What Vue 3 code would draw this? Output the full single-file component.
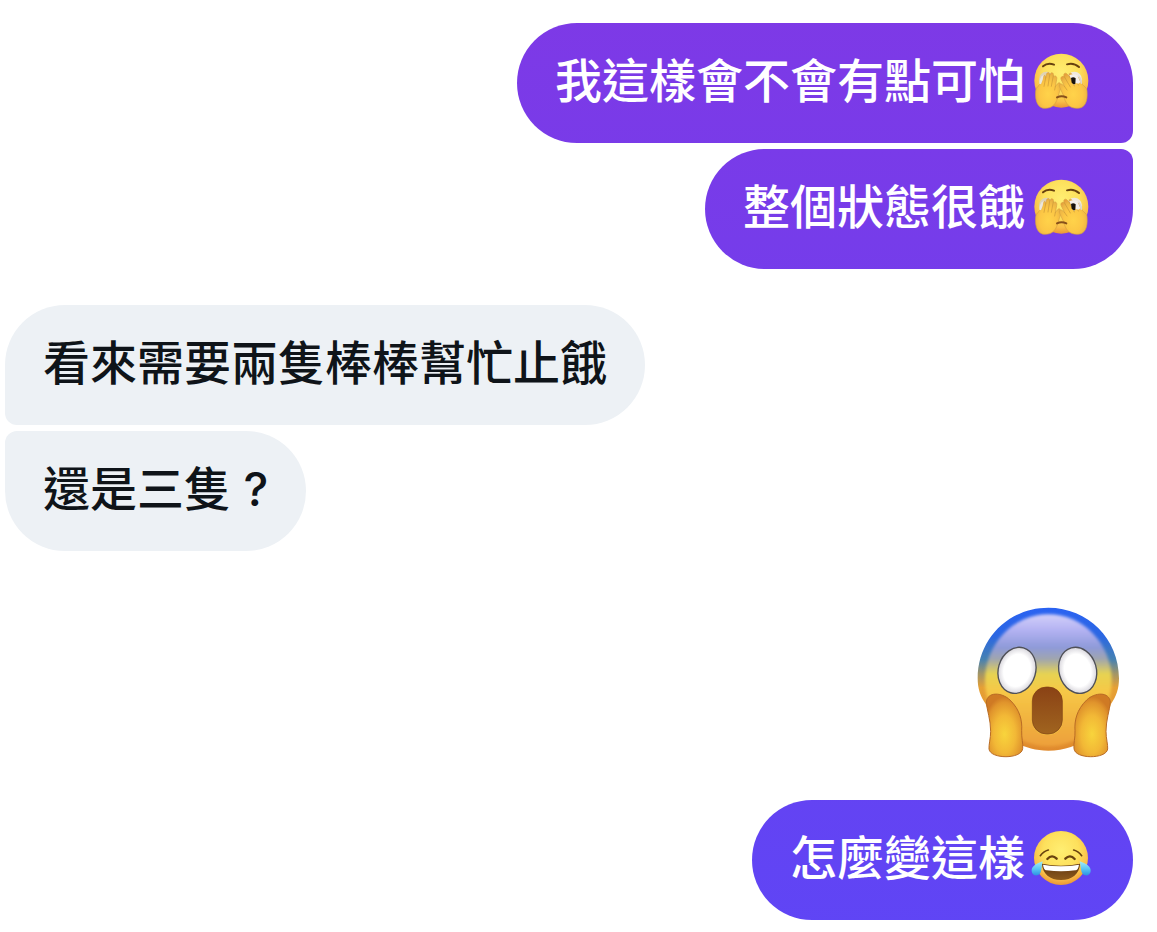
<template>
  <main class="chat">
    <svg class="emoji-defs" aria-hidden="true">
      <defs>
        <radialGradient id="skin" cx="0.5" cy="0.36" r="0.66">
          <stop offset="0" stop-color="#ffee72" />
          <stop offset="0.5" stop-color="#fde05c" />
          <stop offset="0.8" stop-color="#f9bd48" />
          <stop offset="1" stop-color="#e88f33" />
        </radialGradient>
        <radialGradient id="palm" cx="0.5" cy="0.6" r="0.62">
          <stop offset="0" stop-color="#ffd34a" />
          <stop offset="0.55" stop-color="#fcc645" />
          <stop offset="0.85" stop-color="#ecb545" />
          <stop offset="1" stop-color="#e6a03b" />
        </radialGradient>
        <linearGradient id="tear" x1="0" y1="0" x2="0" y2="1">
          <stop offset="0" stop-color="#a5ecf4" />
          <stop offset="0.55" stop-color="#58c4f3" />
          <stop offset="1" stop-color="#2b91e2" />
        </linearGradient>
        <linearGradient id="grin" x1="0" y1="0" x2="0" y2="1">
          <stop offset="0" stop-color="#5d3411" />
          <stop offset="1" stop-color="#8d5a1c" />
        </linearGradient>
        <linearGradient id="scream-rim" x1="0" y1="0" x2="0" y2="1">
          <stop offset="0" stop-color="#2a62f2" />
          <stop offset="0.2" stop-color="#2b67e2" />
          <stop offset="0.36" stop-color="#4581b2" />
          <stop offset="0.46" stop-color="#a09568" />
          <stop offset="0.56" stop-color="#e6a035" />
          <stop offset="1" stop-color="#e08a2d" />
        </linearGradient>
        <linearGradient id="scream-face" x1="0" y1="0" x2="0" y2="1">
          <stop offset="0" stop-color="#d2cff9" />
          <stop offset="0.12" stop-color="#b3b2f2" />
          <stop offset="0.25" stop-color="#8e9ad9" />
          <stop offset="0.34" stop-color="#a0a5ae" />
          <stop offset="0.45" stop-color="#e6d352" />
          <stop offset="0.58" stop-color="#f6c846" />
          <stop offset="1" stop-color="#ed9f3a" />
        </linearGradient>
        <radialGradient id="scream-hand" cx="0.5" cy="0.64" r="0.6">
          <stop offset="0" stop-color="#f8d43c" />
          <stop offset="0.5" stop-color="#f2b836" />
          <stop offset="0.85" stop-color="#e0942c" />
          <stop offset="1" stop-color="#cf7a24" />
        </radialGradient>
        <radialGradient id="eyeball">
          <stop offset="0.7" stop-color="#fff" />
          <stop offset="1" stop-color="#d8d6dc" />
        </radialGradient>
        <linearGradient id="scream-mouth" x1="0" y1="0" x2="0" y2="1">
          <stop offset="0" stop-color="#8a4215" />
          <stop offset="1" stop-color="#a0641f" />
        </linearGradient>
        <filter id="soften" x="-10%" y="-10%" width="120%" height="120%">
          <feGaussianBlur stdDeviation="5" />
        </filter>
      </defs>

      <symbol id="emoji-peek" viewBox="40 38 168 168">
        <circle cx="125" cy="121" r="81" fill="url(#skin)" />
        <g fill="none" stroke="#67410f" stroke-width="6" stroke-linecap="round">
          <path d="M70 78Q84 66 103 73" />
          <path d="M142 72Q162 66 178 80" />
        </g>
        <ellipse cx="80" cy="117" rx="22" ry="23" fill="#dfd3b5" />
        <ellipse cx="164" cy="117" rx="23" ry="23" fill="#efe8df" />
        <path d="M48 151C50 139 57 138 63 130L69 112C72 102 79 104 78 113L80 103C82 94 91 95 90 104L92 101C95 94 103 97 101 106L102 109C107 104 113 109 111 117L107 139C112 132 117 124 121 129C127 137 120 154 116 164C111 190 99 204 76 204C57 204 45 186 48 151Z" fill="url(#palm)" stroke="#d8a240" stroke-width="2" />
        <path d="M202 151C201 141 194 139 188 132L177 113C172 104 165 109 168 117L158 103C153 95 145 99 149 108L143 102C137 94 129 101 134 109C127 106 121 111 125 119L135 139L127 132C121 128 117 134 120 141L131 164C137 190 149 204 173 204C195 204 205 185 202 151Z" fill="url(#palm)" stroke="#d8a240" stroke-width="2" />
        <g fill="none" stroke="#c99636" stroke-width="2" stroke-linecap="round">
          <path d="M78 113L73 138M90 104L85 137M101 106L95 138M107 139L105 149" />
          <path d="M168 117L176 134M149 108L164 137M134 109L152 140M135 139L142 149" />
        </g>
        <path d="M72 103Q59 110 59 130L64 132Q70 120 72 103Z" fill="#ece6dc" />
        <path d="M149 105Q160 98 173 105L182 126L176 130L168 128L163 134Z" fill="#f4efeb" />
        <path d="M176 105Q189 114 187 131L183 130Z" fill="#ddd6cb" />
        <path d="M154 113Q161 108 168 114L167 130Q161 135 156 126Z" fill="#17120e" />
        <path d="M112 171Q126 164 140 171" fill="none" stroke="#87501a" stroke-width="6" stroke-linecap="round" />
      </symbol>

      <symbol id="emoji-joy" viewBox="36 29 168 168" overflow="visible">
        <circle cx="120" cy="113" r="81" fill="url(#skin)" />
        <g fill="none" stroke="#69420f" stroke-linecap="round">
          <path d="M58 106Q67 93 82 89M158 89Q173 93 182 106" stroke-width="5" />
          <path d="M79 116Q93 101 107 115M133 115Q147 101 161 116" stroke-width="7" />
        </g>
        <path d="M63 130Q120 142 177 130C176 160 153 179 120 179C87 179 64 160 63 130Z" fill="url(#grin)" />
        <path d="M66 133Q120 143 174 133C172 145 169 149 163 150Q120 156 77 150C71 149 68 145 66 133Z" fill="#fff" />
        <path d="M65 123C43 131 31 139 32 153C33 168 53 170 59 156C62 147 62 136 65 123Z" fill="url(#tear)" />
        <path d="M176 123C198 131 210 139 209 153C208 168 188 170 182 156C179 147 179 136 176 123Z" fill="url(#tear)" />
      </symbol>

      <symbol id="emoji-scream" viewBox="48 33 432 456">
        <path d="M265 38C384 38 477 132 477 250C477 282 469 304 453 327C431 403 363 467 265 467C167 467 99 403 77 327C61 304 53 282 53 250C53 132 146 38 265 38Z" fill="url(#scream-rim)" />
        <ellipse cx="265" cy="256" rx="190" ry="198" fill="url(#scream-face)" filter="url(#soften)" />
        <g fill="url(#eyeball)" stroke="#4f5057" stroke-width="4">
          <ellipse cx="171" cy="226" rx="56" ry="70" transform="rotate(16 171 226)" />
          <ellipse cx="353" cy="226" rx="56" ry="70" transform="rotate(-16 353 226)" />
        </g>
        <rect x="215" y="276" width="94" height="144" rx="44" fill="#f0bb40" />
        <rect x="217" y="276" width="90" height="141" rx="42" fill="url(#scream-mouth)" stroke="#7d3f14" stroke-width="2" />
        <path d="M79 321C82 290 125 291 150 315C180 344 187 377 185 407C184 429 190 445 188 461C185 493 91 493 87 462C86 449 92 430 92 409C92 374 81 347 79 321Z" fill="url(#scream-hand)" stroke="#b96c25" stroke-width="3" />
        <path d="M451 321C448 290 405 291 380 315C350 344 343 377 345 407C346 429 340 445 342 461C345 493 439 493 443 462C444 449 438 430 438 409C438 374 449 347 451 321Z" fill="url(#scream-hand)" stroke="#b96c25" stroke-width="3" />
      </symbol>
    </svg>

    <ol v-for="(group, i) in groups" :key="i" class="group" :class="group.from">
      <li
        v-for="message in group.messages"
        :key="message.text"
        :class="message.text ? 'bubble' : 'sticker'"
      >
        <span v-if="message.text">{{ message.text }}</span>
        <svg v-if="message.emoji" class="emoji" role="img" :aria-label="message.emoji">
          <use :href="'#emoji-' + message.emoji" />
        </svg>
      </li>
    </ol>
  </main>
</template>

<script setup>
const groups = [
  {
    from: 'sent',
    messages: [
      { text: '我這樣會不會有點可怕', emoji: 'peek' },
      { text: '整個狀態很餓', emoji: 'peek' }
    ]
  },
  {
    from: 'received',
    messages: [
      { text: '看來需要兩隻棒棒幫忙止餓' },
      { text: '還是三隻 ?' }
    ]
  },
  { from: 'sent', messages: [{ text: '', emoji: 'scream' }] },
  { from: 'sent', messages: [{ text: '怎麼變這樣', emoji: 'joy' }] }
]
</script>

<style>
body {
  margin: 0;
  background: #fff;
}
</style>

<style scoped>
.chat {
  display: flex;
  flex-direction: column;
  gap: 36px;
  padding: 23px 24px 12px 5px;
  font-family: Inter, "Noto Sans CJK TC", sans-serif;
  font-size: 47px;
  font-weight: 500;
  line-height: 56px;
}

.emoji-defs {
  position: absolute;
  width: 0;
  height: 0;
}

.group {
  display: flex;
  flex-direction: column;
  align-items: flex-start;
  gap: 6px;
  margin: 0;
  padding: 0;
  list-style: none;
}

.sent {
  align-items: flex-end;
}

.bubble {
  display: flex;
  align-items: center;
  box-sizing: border-box;
  padding: 30px 38px 34px;
  border-radius: 60px;
}

.sent .bubble {
  color: #fff;
  /* one gradient runs behind all the sent bubbles */
  background: linear-gradient(#7e39e6, #5f45f5) fixed;
}

.received .bubble {
  color: #0f1419;
  background: #edf1f5;
}

.sent .bubble:not(:last-child) {
  border-bottom-right-radius: 12px;
}

.sent .bubble:not(:first-child) {
  border-top-right-radius: 12px;
}

.received .bubble:not(:last-child) {
  border-bottom-left-radius: 12px;
}

.received .bubble:not(:first-child) {
  border-top-left-radius: 12px;
}

.emoji {
  flex: none;
  width: 56px;
  height: 56px;
  margin: 0 6px 0 8px;
  overflow: visible;
}

.sticker {
  display: flex;
  padding: 19px 13px 6px 0;
}

.sticker .emoji {
  width: 144px;
  height: 152px;
  margin: 0;
}
</style>
